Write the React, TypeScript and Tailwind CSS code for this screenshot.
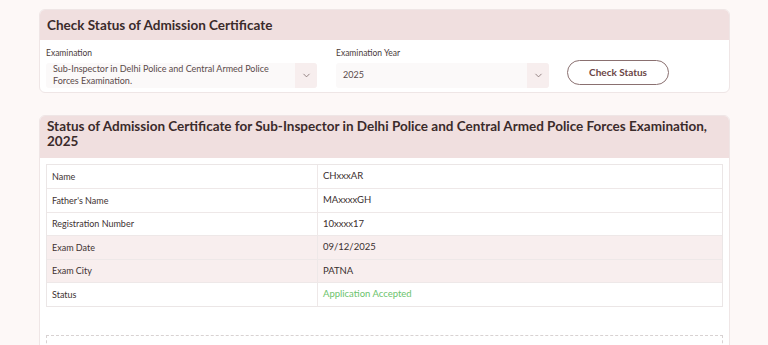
import { ChevronDown } from 'lucide-react';

const rows = [
  { label: 'Name', value: 'CHxxxAR', shade: false },
  { label: "Father's Name", value: 'MAxxxxGH', shade: false },
  { label: 'Registration Number', value: '10xxxx17', shade: false },
  { label: 'Exam Date', value: '09/12/2025', shade: true },
  { label: 'Exam City', value: 'PATNA', shade: true },
  { label: 'Status', value: 'Application Accepted', shade: false, green: true },
];

function SelectBox({ width, children }: { width: string; children: React.ReactNode }) {
  return (
    <div className={`${width} h-[25px] flex rounded-[3px] overflow-hidden bg-[#fbf9f9]`}>
      <div className="flex-1 flex items-center pl-[7px] pr-2 text-[9px] leading-[12px] text-[#5a4a4a]">
        {children}
      </div>
      <div className="w-[22px] flex items-center justify-center bg-[#f7eeee]">
        <ChevronDown className="w-[11px] h-[11px] text-[#7d6a6a]" strokeWidth={1.75} />
      </div>
    </div>
  );
}

export default function App() {
  return (
    <div
      className="w-[768px] h-[345px] overflow-hidden bg-[#fdf8f7] pt-[9px]"
      style={{ fontFamily: 'Lato, "Noto Sans", sans-serif' }}
    >
      {/* Search card */}
      <div className="ml-[39px] w-[691px] rounded-[6px] border border-[#efe6e6] bg-white overflow-hidden">
        <div className="h-[30px] bg-[#f0dfdf] flex items-center px-[7px]">
          <h2 className="text-[13.5px] font-bold text-[#3b2b2b]">Check Status of Admission Certificate</h2>
        </div>
        <div className="flex items-end px-[6px] pt-[7px] pb-[4px]">
          <div>
            <div className="text-[8.5px] text-[#4a3a3a] mb-[3px]">Examination</div>
            <SelectBox width="w-[271px]">
              <span>
                Sub-Inspector in Delhi Police and Central Armed Police
                <br />
                Forces Examination.
              </span>
            </SelectBox>
          </div>
          <div className="ml-[19px]">
            <div className="text-[8.5px] text-[#4a3a3a] mb-[3px]">Examination Year</div>
            <SelectBox width="w-[213px]">2025</SelectBox>
          </div>
          <button className="ml-[18px] mb-[3px] w-[102px] h-[25px] rounded-full border border-[#8a7070] text-[10px] font-bold text-[#6b4545]">
            Check Status
          </button>
        </div>
      </div>

      {/* Result card */}
      <div className="mt-[22px] ml-[39px] w-[691px] h-[240px] rounded-t-[6px] border border-[#efe6e6] bg-white overflow-hidden">
        <div className="h-[42px] bg-[#f0dfdf] px-[7px] pt-[3px]">
          <h2 className="text-[13.5px] leading-[15px] font-bold text-[#3b2b2b]">
            Status of Admission Certificate for Sub-Inspector in Delhi Police and Central Armed Police Forces Examination,
            <br />
            2025
          </h2>
        </div>
        <div className="px-[6px] pt-[6px]">
          <div className="border border-[#ebe6e6]">
            {rows.map((r, i) => (
              <div
                key={r.label}
                className={`flex h-[23.5px] ${i > 0 ? 'border-t border-[#eee8e8]' : ''} ${r.shade ? 'bg-[#f8eeee]' : 'bg-white'}`}
              >
                <div className="w-[271px] flex items-center pl-[5px] text-[9px] text-[#3e3232] border-r border-[#eee8e8]">
                  {r.label}
                </div>
                <div
                  className={`flex-1 flex items-center pl-[5px] text-[9.5px] ${r.green ? 'text-[#6cc36c]' : 'text-[#3a2e2e]'}`}
                >
                  {r.value}
                </div>
              </div>
            ))}
          </div>
          <div className="mt-[28px] h-[40px] border border-dashed border-[#d8d2d2]" />
        </div>
      </div>
    </div>
  );
}
